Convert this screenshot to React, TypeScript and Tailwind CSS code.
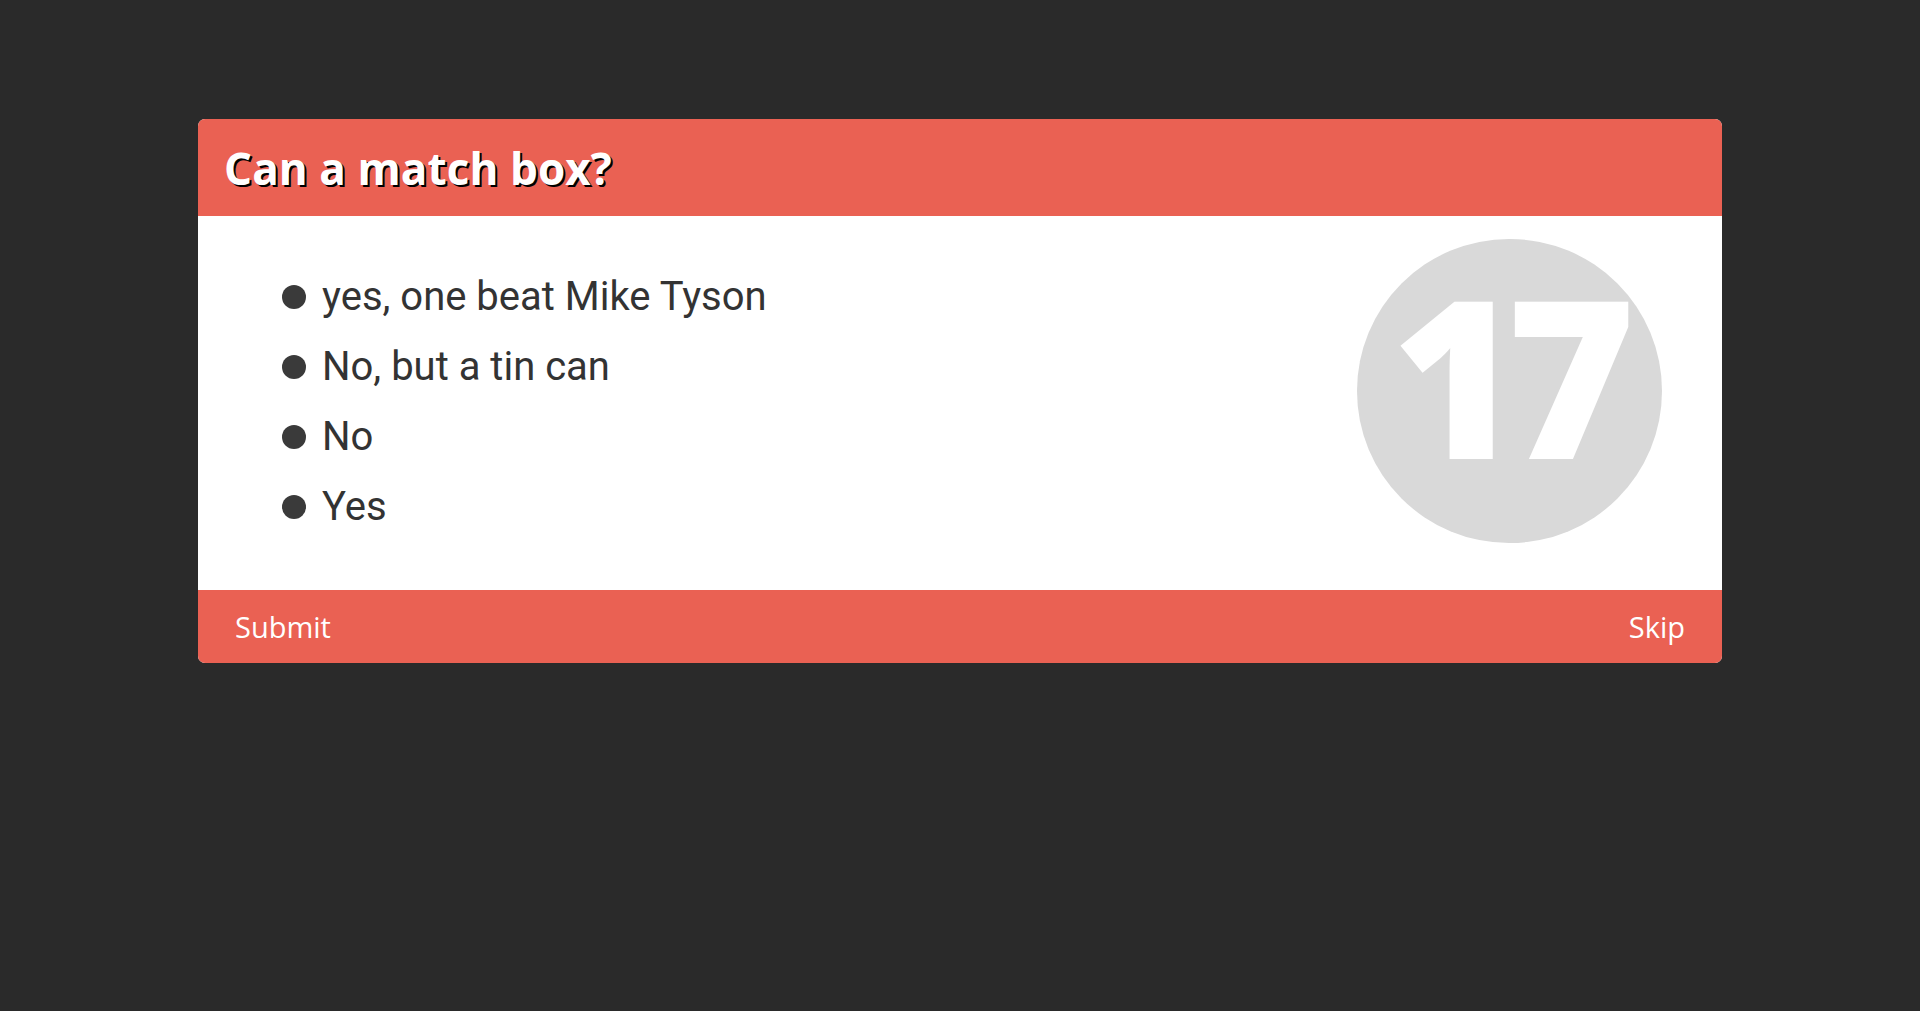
import * as React from "react"

const answers = ["yes, one beat Mike Tyson", "No, but a tin can", "No", "Yes"]

const App: React.FC = () => {
  return (
    <main className="min-h-[1011px] w-full bg-[#2a2a2a] pt-[119px]">
      <div className="mx-auto w-[1524px] overflow-hidden rounded-[7px] bg-white">
        <div className="flex h-[97px] items-center bg-[#ea6153] px-[26px]">
          <h1 className="font-['Open_Sans',sans-serif] text-[44px] font-bold tracking-[0.1px] text-white [text-shadow:2px_2px_0_#000]">
            Can a match box?
          </h1>
        </div>
        <div className="flex h-[374px] justify-between pl-[84px] pr-[60px]">
          <ul className="flex flex-col pt-[46px] font-['Roboto',sans-serif] text-[40px] leading-[70px] text-[#333]">
            {answers.map((a) => (
              <li key={a} className="flex items-center gap-[16px]">
                <span className="h-[24px] w-[24px] rounded-full bg-[#3a3a3a]" />
                {a}
              </li>
            ))}
          </ul>
          <div className="mt-[23px] flex h-[304px] w-[305px] items-center justify-center rounded-full bg-[#d9d9d9] pb-[34px] pr-[6px]">
            <span className="font-['Open_Sans',sans-serif] text-[220px] font-extrabold leading-none tracking-[-14px] text-white">
              17
            </span>
          </div>
        </div>
        <div className="flex h-[73px] items-center justify-between bg-[#ea6153] px-[37px] font-['Open_Sans',sans-serif] text-[29px] text-white">
          <span>Submit</span>
          <span>Skip</span>
        </div>
      </div>
    </main>
  )
}

export default App
